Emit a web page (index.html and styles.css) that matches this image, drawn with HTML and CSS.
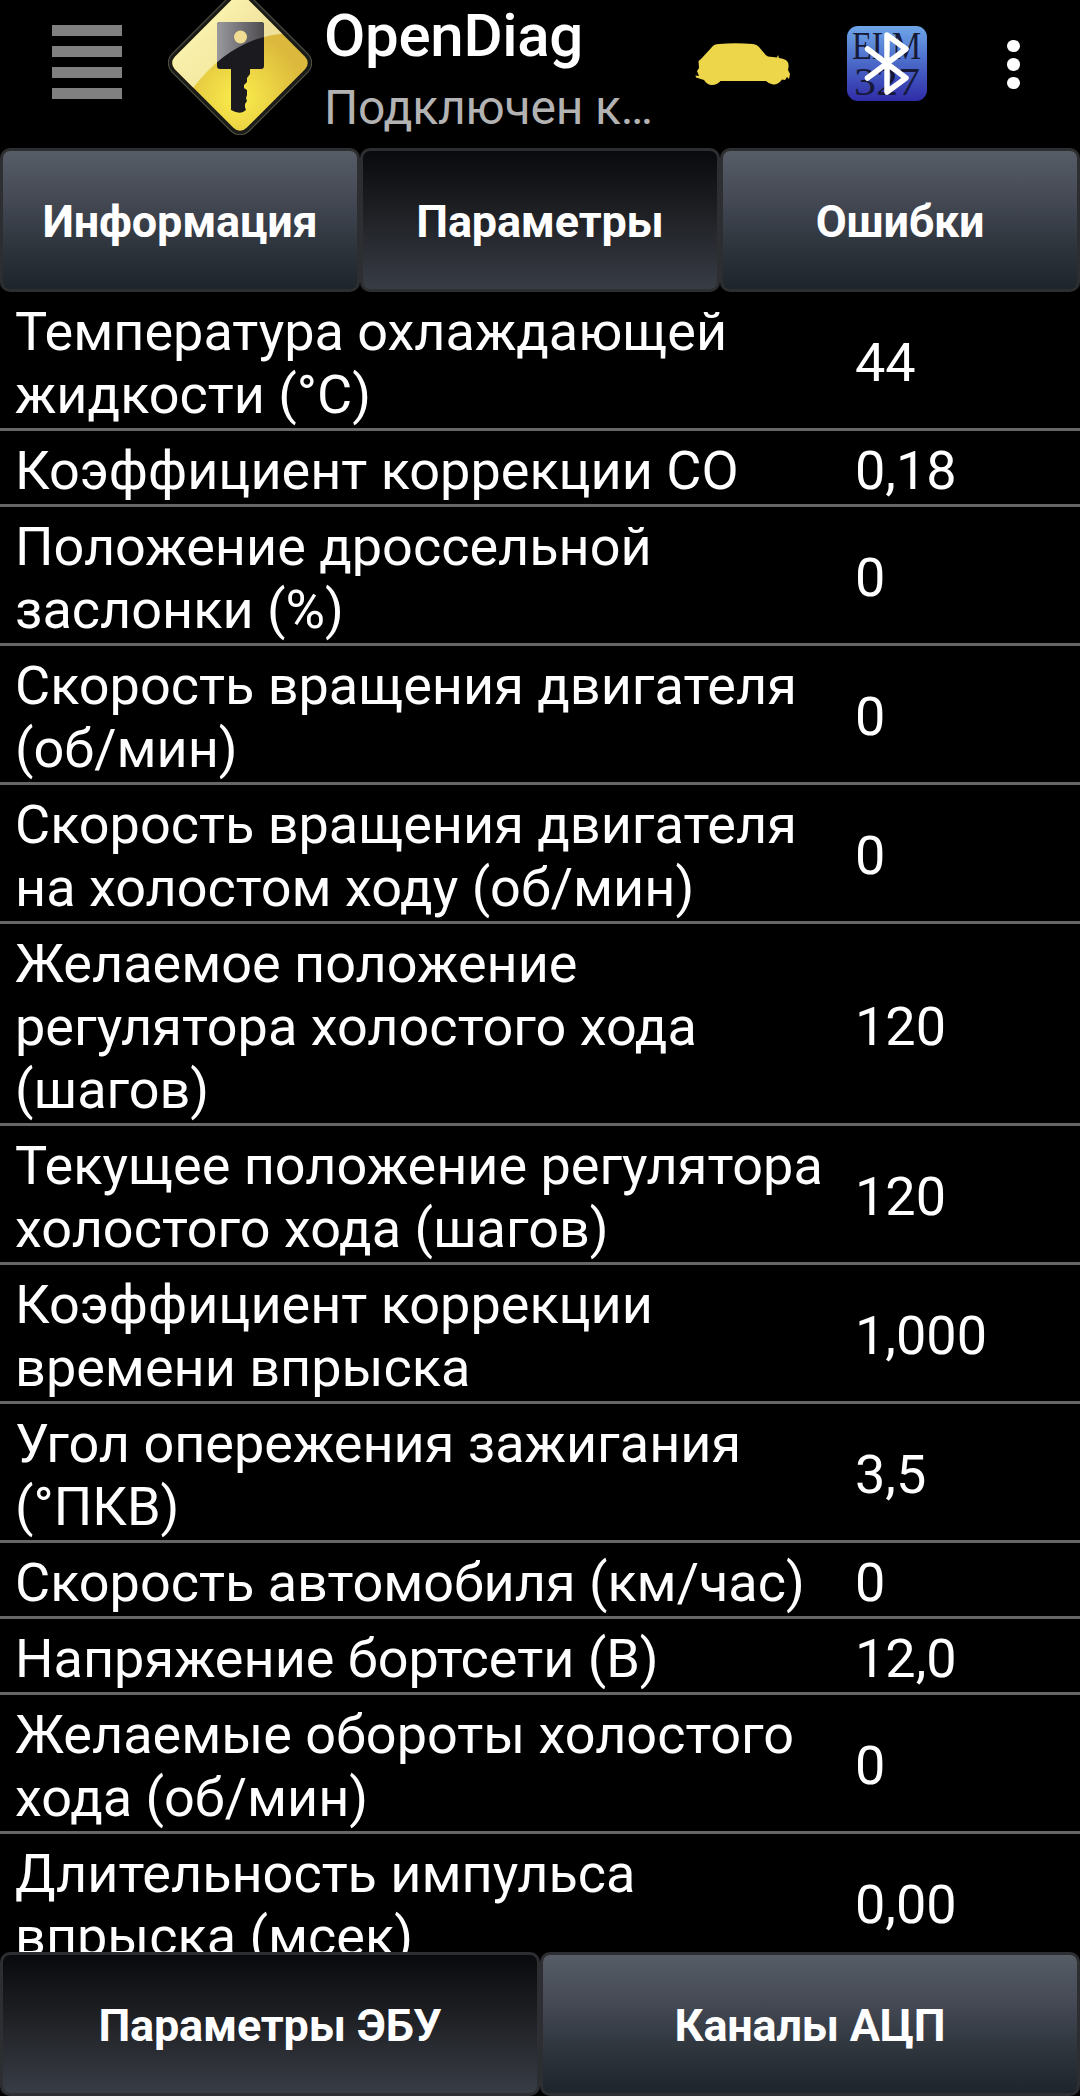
FILE: index.html
```
<!DOCTYPE html>
<html lang="ru">
<head>
    <meta charset="UTF-8">
    <title>OpenDiag</title>
    <link rel="stylesheet" href="styles.css">
</head>
<body>
    <header class="app-bar">
        <div class="menu"><span></span><span></span><span></span><span></span></div>
        <svg class="logo" viewBox="0 0 144 144">
            <defs>
                <radialGradient id="sign" gradientUnits="userSpaceOnUse" cx="95" cy="98" r="66">
                    <stop offset="0" stop-color="#fbee4c"/>
                    <stop offset="1" stop-color="#dcb93c"/>
                </radialGradient>
                <linearGradient id="gloss" x1="0" y1="0" x2="1" y2="0">
                    <stop offset="0" stop-color="#fffbc0" stop-opacity=".85"/>
                    <stop offset="1" stop-color="#f2ecd2" stop-opacity=".5"/>
                </linearGradient>
                <linearGradient id="keyGloss" x1="0" y1="0" x2="1" y2="0">
                    <stop offset="0" stop-color="#9a9a9e"/>
                    <stop offset="1" stop-color="#4e4b4f"/>
                </linearGradient>
                <clipPath id="shine"><path d="M0 0H144V44C100 36 58 54 25 97L0 110Z"/></clipPath>
            </defs>
            <rect x="17.500" y="17.500" width="109" height="109" rx="13" transform="rotate(45 72 72)" fill="#1b1c18" stroke="#55554c" stroke-width="1"/>
            <rect x="21.500" y="21.500" width="101" height="101" rx="9" transform="rotate(45 72 72)" fill="url(#sign)"/>
            <g clip-path="url(#shine)">
                <rect x="21.500" y="21.500" width="101" height="101" rx="9" transform="rotate(45 72 72)" fill="url(#gloss)"/>
            </g>
            <path d="M52 31H93Q96 31 96 34V75Q96 78 93 78H82V83L79 87V91L76 94V97L79 99V104L78 107L79 110L77 113V116L78 119L75 121Q70 123 63 119V78H52Q49 78 49 75V34Q49 31 52 31Z" fill="#1b1b1f"/>
            <g clip-path="url(#shine)">
                <rect x="49" y="31" width="47" height="47" rx="3" fill="url(#keyGloss)"/>
            </g>
            <circle cx="72.500" cy="46" r="6.500" fill="#f0dd93"/>
        </svg>
        <div class="titles">
            <h1>OpenDiag</h1>
            <p>Подключен к…</p>
        </div>
        <svg class="car" viewBox="0 0 96 43">
            <path d="M17 4Q19 1 24 1Q40-.5 58 1Q62 1.500 64 4L69 10Q71 13 73 13.500L82 14.500L83 12L84 15Q90 16 92 18Q94 20 93.500 24L93 27L95 31L94 36L92 34L90 37L87 36.500Q83 42 78 41.500Q74 41 71 38H25.500Q22 42 17 42Q12 42 9 37L1 34.500L.5 32.500L4 33L2 28L4 25L3.500 18L6 16Z" fill="#eed64a"/>
        </svg>
        <svg class="elm" viewBox="0 0 80 75">
            <defs>
                <linearGradient id="blue" x1="0" y1="0" x2="0" y2="1">
                    <stop offset="0" stop-color="#6ea6e8"/>
                    <stop offset=".5" stop-color="#4a68c8"/>
                    <stop offset="1" stop-color="#302ca8"/>
                </linearGradient>
            </defs>
            <rect width="80" height="75" rx="11" fill="url(#blue)"/>
            <g class="elm-text">
                <text x="5" y="33" textLength="69" lengthAdjust="spacingAndGlyphs">ELM</text>
                <text x="7" y="69" textLength="66" lengthAdjust="spacingAndGlyphs">327</text>
            </g>
            <path d="M20.500 23L59 52L40 66V9L59 23L20.500 52" fill="none" stroke="#fff" stroke-width="5.500" stroke-linecap="round" stroke-linejoin="round"/>
        </svg>
        <div class="more"><i></i><i></i><i></i></div>
    </header>

    <nav class="tabs">
        <button>Информация</button>
        <button class="active">Параметры</button>
        <button>Ошибки</button>
    </nav>

    <main class="params">
        <div class="row"><div class="name">Температура охлаждающей жидкости (°C)</div><div class="value">44</div></div>
        <div class="row"><div class="name">Коэффициент коррекции СО</div><div class="value">0,18</div></div>
        <div class="row"><div class="name">Положение дроссельной заслонки (%)</div><div class="value">0</div></div>
        <div class="row"><div class="name">Скорость вращения двигателя (об/мин)</div><div class="value">0</div></div>
        <div class="row"><div class="name">Скорость вращения двигателя на холостом ходу (об/мин)</div><div class="value">0</div></div>
        <div class="row"><div class="name">Желаемое положение регулятора холостого хода (шагов)</div><div class="value">120</div></div>
        <div class="row"><div class="name">Текущее положение регулятора холостого хода (шагов)</div><div class="value">120</div></div>
        <div class="row"><div class="name">Коэффициент коррекции времени впрыска</div><div class="value">1,000</div></div>
        <div class="row"><div class="name">Угол опережения зажигания (°ПКВ)</div><div class="value">3,5</div></div>
        <div class="row"><div class="name">Скорость автомобиля (км/час)</div><div class="value">0</div></div>
        <div class="row"><div class="name">Напряжение бортсети (В)</div><div class="value">12,0</div></div>
        <div class="row"><div class="name">Желаемые обороты холостого хода (об/мин)</div><div class="value">0</div></div>
        <div class="row"><div class="name">Длительность импульса впрыска (мсек)</div><div class="value">0,00</div></div>
    </main>

    <nav class="tabs">
        <button class="active">Параметры ЭБУ</button>
        <button>Каналы АЦП</button>
    </nav>
</body>
</html>
```
FILE: styles.css
```
* { box-sizing: border-box; }
body {
    margin: 0;
    height: 2100px;
    display: flex;
    flex-direction: column;
    overflow: hidden;
    background: #000;
    border-bottom: 4px solid #f5f5f5;
    color: #fff;
    font-family: Roboto, sans-serif;
}
.app-bar {
    flex: none;
    display: flex;
    align-items: center;
    height: 148px;
    padding: 0 60px 22px 52px;
    overflow: hidden;
}
.app-bar svg {
    flex: none;
    display: block;
}
.menu {
    display: flex;
    flex-direction: column;
    gap: 10px;
    width: 70px;
    margin: 0 46px 2px 0;
}
.menu span {
    height: 11px;
    background: #808080;
}
.logo {
    width: 144px;
    height: 144px;
}
.titles {
    align-self: flex-start;
    width: 370px;
    padding: 1px 0 0 12px;
    white-space: nowrap;
}
.titles h1 {
    margin: 0;
    font-size: 60px;
    font-weight: 500;
    line-height: 70px;
    letter-spacing: -0.3px;
}
.titles p {
    margin: 9px 0 0;
    font-size: 48px;
    line-height: 56px;
    letter-spacing: -0.2px;
    color: #b3b3b3;
}
.car {
    width: 96px;
    height: 43px;
    margin: 2px 0 0 13px;
}
.elm {
    width: 80px;
    height: 75px;
    margin: 1px 0 0 56px;
}
.elm-text {
    font-family: "Liberation Serif", serif;
    font-size: 41px;
    fill: #161a38;
}
.more {
    display: flex;
    flex-direction: column;
    gap: 6px;
    margin: 3px 0 0 80px;
}
.more i {
    width: 12.5px;
    height: 12.5px;
    border-radius: 50%;
    background: #fff;
}
.tabs {
    flex: none;
    display: flex;
    height: 144px;
}
.tabs button {
    flex: 1 1 0;
    padding: 2px 0 0;
    border: 3px solid #2d2e32;
    border-radius: 10px;
    background: linear-gradient(#575d67, #414651 40%, #2d343b 70%, #1d242c);
    color: #fff;
    font: bold 45px Roboto, sans-serif;
    letter-spacing: -0.2px;
}
.tabs .active {
    background: linear-gradient(#090a0e, #1e2024 45%, #383c45);
}
.params {
    flex: 1;
    min-height: 0;
    overflow: hidden;
    font-size: 54px;
    line-height: 63px;
}
.row {
    display: flex;
    align-items: center;
    border-bottom: 3px solid #666;
}
.name {
    width: 840px;
    padding: 8px 0 2px 15px;
}
.value {
    flex: 1;
    padding: 7.75px 0 2.25px 15px;
}
```
